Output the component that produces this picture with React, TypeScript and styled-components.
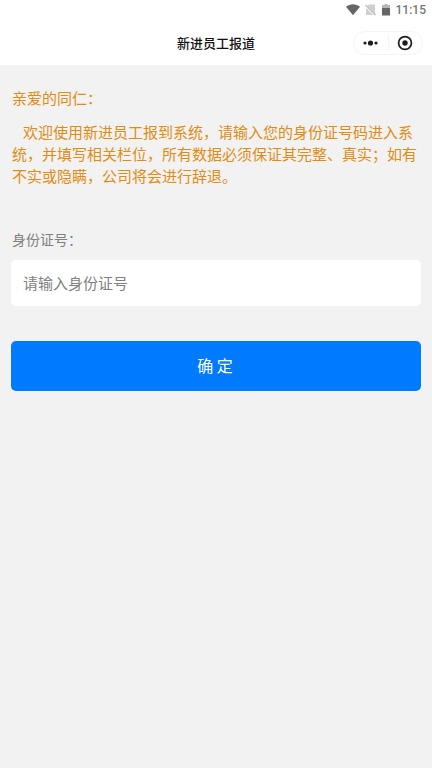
import React, { useState } from "react";
import styled, { createGlobalStyle } from "styled-components";

const GlobalStyle = createGlobalStyle`
  * { box-sizing: border-box; }
  body {
    margin: 0;
    background: #f2f2f2;
    font-family: "Noto Sans CJK SC", sans-serif;
  }
`;

const Page = styled.div`
  min-height: 100vh;
  display: flex;
  flex-direction: column;
  background: #f2f2f2;
`;

const Header = styled.header`
  background: #ffffff;
`;

const StatusBar = styled.div`
  display: flex;
  align-items: center;
  justify-content: flex-end;
  height: 20px;
  padding: 0 6px;
  color: #757575;
`;

const StatusIcon = styled.svg<{ $gap: number }>`
  display: block;
  flex: none;
  margin-right: ${(p) => p.$gap}px;
`;

const Clock = styled.time`
  font: 500 12px/20px Roboto, sans-serif;
`;

const TitleBar = styled.div`
  display: grid;
  grid-template-columns: 1fr auto 1fr;
  align-items: center;
  height: 45px;
  padding: 0 9px;
`;

const Title = styled.h1`
  grid-column: 2;
  margin: 0;
  font-size: 13px;
  line-height: 20px;
  font-weight: 500;
  color: #111111;
`;

const Capsule = styled.div`
  justify-self: end;
  display: flex;
  align-items: center;
  width: 70px;
  height: 24px;
  border: 1px solid #f5f5f5;
  border-radius: 12px;
  background: #ffffff;
`;

const CapsuleButton = styled.button`
  flex: 1;
  display: flex;
  align-items: center;
  justify-content: center;
  height: 18px;
  padding: 0;
  border: 0;
  background: none;
  color: #1c1c1c;
  cursor: pointer;

  & + & {
    border-left: 1px solid #f5f5f5;
  }
`;

const Content = styled.main`
  padding: 22px 11px;
`;

const Notice = styled.section`
  padding: 0 1px;
  font-size: 15px;
  line-height: 22px;
  color: #e08c14;
`;

const Greeting = styled.p`
  margin: 0 0 12px;
`;

const Message = styled.p`
  margin: 0;
  text-indent: 11px;
`;

const Form = styled.form`
  display: flex;
  flex-direction: column;
  margin-top: 42px;
`;

const Label = styled.label`
  padding: 0 1px;
  margin-bottom: 11px;
  font-size: 14px;
  line-height: 20px;
  color: #808080;
`;

const Field = styled.input`
  width: 100%;
  height: 46px;
  padding: 0 12px 2px;
  border: 0;
  border-radius: 5px;
  background: #ffffff;
  font-family: inherit;
  font-size: 15px;
  color: #333333;

  &::placeholder {
    color: #808080;
    opacity: 1;
  }
`;

const Submit = styled.button`
  width: 100%;
  height: 50px;
  margin-top: 35px;
  padding: 0 2px 2px 0;
  border: 0;
  border-radius: 5px;
  background: #007aff;
  font-family: inherit;
  font-size: 16px;
  line-height: 24px;
  color: #ffffff;
  cursor: pointer;
`;

export default function App() {
  const [idNumber, setIdNumber] = useState("");

  return (
    <Page>
      <GlobalStyle />
      <Header>
        <StatusBar>
          <StatusIcon $gap={5} width="14" height="12" viewBox="0 0 14 12" aria-hidden="true">
            <path d="M0 2.8C4 -.6 10 -.6 14 2.8L7 11.2Z" fill="#666" />
          </StatusIcon>
          <StatusIcon $gap={6} width="11" height="12" viewBox="0 0 11 12" aria-hidden="true">
            <path d="M4 .5H10V11H1V3.5Z" fill="#cfcfcf" />
            <path d="M.5 1.5L10.5 11.5" stroke="#fff" strokeWidth="2.4" />
            <path d="M.5 .8L10.5 11" stroke="#b5b5b5" strokeWidth="1.2" />
          </StatusIcon>
          <StatusIcon $gap={6} width="8" height="12" viewBox="0 0 8 12" aria-hidden="true">
            <path d="M2.5 0H5.5V1H8V4H0V1H2.5Z" fill="#b5b5b5" />
            <path d="M0 4H8V11.5H0Z" fill="#666" />
          </StatusIcon>
          <Clock>11:15</Clock>
        </StatusBar>
        <TitleBar>
          <Title>新进员工报道</Title>
          <Capsule>
            <CapsuleButton type="button" aria-label="更多">
              <svg width="16" height="6" viewBox="0 0 16 6" fill="currentColor" aria-hidden="true">
                <circle cx="2" cy="3" r="1.6" />
                <circle cx="7.5" cy="3" r="2.6" />
                <circle cx="13" cy="3" r="1.6" />
              </svg>
            </CapsuleButton>
            <CapsuleButton type="button" aria-label="关闭">
              <svg width="16" height="16" viewBox="0 0 16 16" aria-hidden="true">
                <circle cx="8" cy="8" r="6.4" fill="none" stroke="currentColor" strokeWidth="1.7" />
                <circle cx="8" cy="8" r="2.7" fill="currentColor" />
              </svg>
            </CapsuleButton>
          </Capsule>
        </TitleBar>
      </Header>
      <Content>
        <Notice>
          <Greeting>亲爱的同仁：</Greeting>
          <Message>
            欢迎使用新进员工报到系统，请输入您的身份证号码进入系统，并填写相关栏位，所有数据必须保证其完整、真实；如有不实或隐瞒，公司将会进行辞退。
          </Message>
        </Notice>
        <Form onSubmit={(e) => e.preventDefault()}>
          <Label htmlFor="id-number">身份证号：</Label>
          <Field
            id="id-number"
            type="text"
            placeholder="请输入身份证号"
            value={idNumber}
            onChange={(e) => setIdNumber(e.target.value)}
          />
          <Submit type="submit">确 定</Submit>
        </Form>
      </Content>
    </Page>
  );
}
